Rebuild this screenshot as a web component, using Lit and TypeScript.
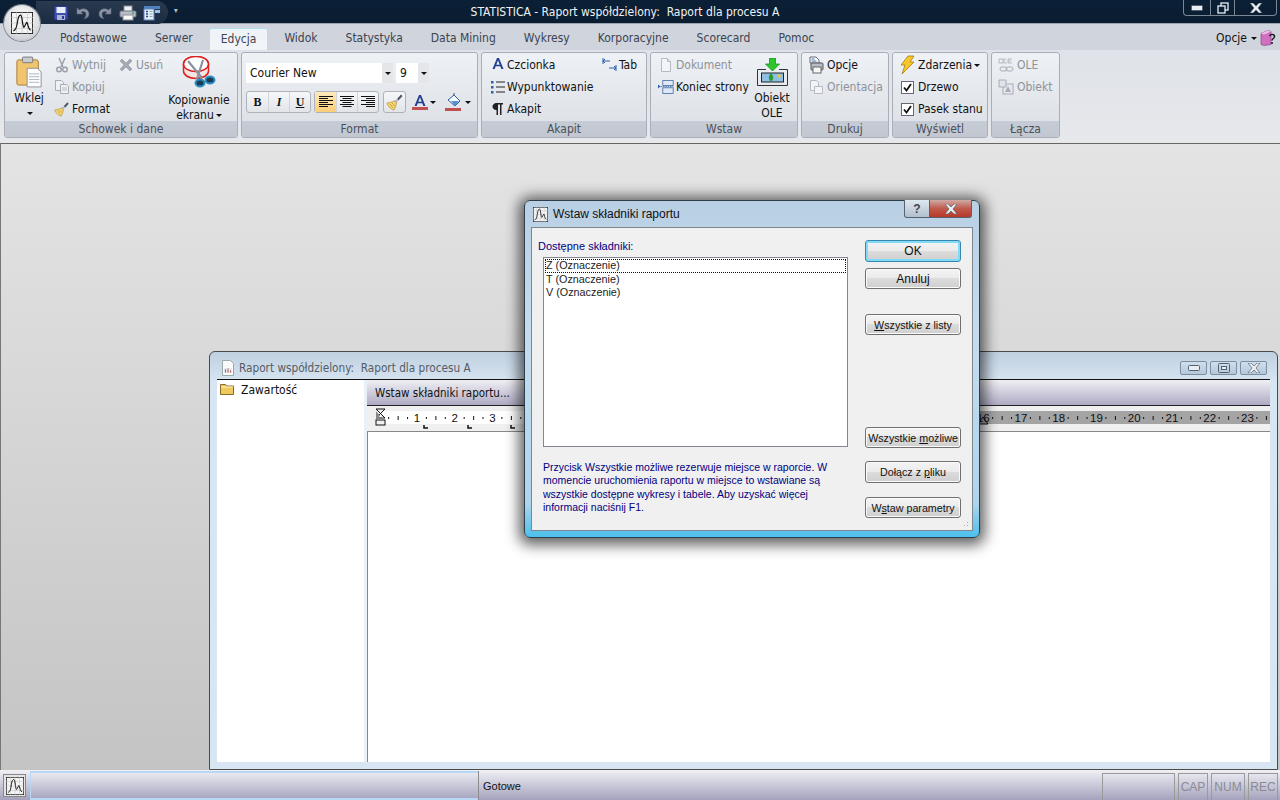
import { LitElement, html, svg, css } from 'lit';
import { customElement } from 'lit/decorators.js';

// small chart glyph used for the app orb, the dialog icon and the status bar
const chart = (size: number) => html`<svg width=${size} height=${size} viewBox="0 0 28 28">
  <rect x=".5" y=".5" width="27" height="27" fill="#f4f4f4" stroke="#222" stroke-width="1.300"/>
  <path d="M0 7h28M0 14h28M0 21h28M7 0v28M14 0v28M21 0v28" stroke="#bbb" stroke-width=".7"/>
  <path d="M3 24c3-1 4-3 5-10s2-10 4-10 2 6 3 11 1 6 3 2 2-5 3-2 1 7 4 8" fill="none" stroke="#111" stroke-width="1.500"/>
</svg>`;

const icons: Record<string, any> = {
  save: html`<svg width="16" height="16" viewBox="0 0 16 16"><rect x="1" y="1" width="14" height="14" rx="1" fill="#3b4fae" stroke="#1c2a70"/><rect x="3.500" y="2" width="9" height="6" fill="#e6ecfa"/><rect x="4" y="10" width="8" height="5" fill="#aab4d8"/><rect x="9" y="11" width="2" height="3" fill="#2b3a90"/></svg>`,
  undo: html`<svg width="16" height="16" viewBox="0 0 16 16"><path d="M2 3v6h6L6 7c3-1.500 5 0 5 2.500 0 2-1 3-2 4 3 0 5-2 5-4.500C14 4.500 9 2 4.500 5z" fill="#8b94a6" stroke="#5c6476" stroke-width=".6"/></svg>`,
  redo: html`<svg width="16" height="16" viewBox="0 0 16 16"><path d="M14 3v6H8l2-2c-3-1.500-5 0-5 2.500 0 2 1 3 2 4-3 0-5-2-5-4.500C2 4.500 7 2 11.500 5z" fill="#8b94a6" stroke="#5c6476" stroke-width=".6"/></svg>`,
  print: html`<svg width="18" height="16" viewBox="0 0 18 16"><rect x="5" y="1" width="8" height="6" fill="#eef0f4" stroke="#8a8f9a"/><rect x="1" y="6" width="16" height="6" rx="1" fill="#b9bdc6" stroke="#70757f"/><rect x="4" y="10" width="10" height="5" fill="#f8f8f8" stroke="#8a8f9a"/><rect x="13" y="7.500" width="2" height="1.500" fill="#3a6"/></svg>`,
  form: html`<svg width="18" height="16" viewBox="0 0 18 16"><rect x="1" y="1" width="16" height="3" fill="#4f80c0"/><rect x="1" y="4" width="10" height="11" fill="#e6eef8" stroke="#5d83b5"/><path d="M3 6.500h2M3 9h2M3 11.500h2" stroke="#204a90" stroke-width="1.400"/><path d="M6.500 6.500h3M6.500 9h3M6.500 11.500h3" stroke="#8aa"/><rect x="12" y="5" width="5" height="3" fill="#9fc0e6"/></svg>`,
  paste: html`<svg width="28" height="32" viewBox="0 0 30 34"><rect x="2" y="4" width="23" height="27" rx="2" fill="#f1c46e" stroke="#a67a30"/><rect x="8" y="1" width="11" height="6" rx="1" fill="#c9ccd2" stroke="#777"/><path d="M13 13h11l4 4v16H13z" fill="#fdfdfd" stroke="#8a8f9a"/><path d="M15 19h11M15 22h11M15 25h11M15 28h11" stroke="#a9b4c6"/></svg>`,
  scissors: html`<svg width="16" height="16" viewBox="0 0 16 16" fill="none" stroke="#9a9ea8" stroke-width="1.400"><path d="M5 1l4 9M11 1L7 10"/><circle cx="5" cy="12.500" r="2.300"/><circle cx="11" cy="12.500" r="2.300"/></svg>`,
  del: html`<svg width="16" height="16" viewBox="0 0 16 16"><path d="M2 4l2-2 4 4 4-4 2 2-4 4 4 4-2 2-4-4-4 4-2-2 4-4z" fill="#a4a8b2" stroke="#8d919b" stroke-width=".5"/></svg>`,
  copy: html`<svg width="16" height="16" viewBox="0 0 16 16" fill="#eef0f4" stroke="#a9adb6"><path d="M1.500 1.500h6l2 2v8h-8z"/><path d="M6.500 5.500h6l2 2v7h-8z"/><path d="M8 9h5M8 11h5" stroke="#b8bcc5"/></svg>`,
  brush: html`<svg width="18" height="18" viewBox="0 0 18 18"><path d="M11 6l4-4.500 1.500 1.500-4 4.500z" fill="#4c5568"/><path d="M11 6l1.500 1.500-2 2-2.500-1.500z" fill="#b9bdc6"/><path d="M8 8c-2 1-5 2-7 2 0 2 3 6 7 7 1-2 2.500-5 2.500-7.500z" fill="#f4d676" stroke="#b58f28" stroke-width=".7"/><path d="M4 11l3 4M6 10l3 3" stroke="#b58f28" stroke-width=".7"/></svg>`,
  capture: html`<svg width="34" height="34" viewBox="0 0 34 34"><ellipse cx="14" cy="8" rx="12.500" ry="7.500" fill="#fff" stroke="#d22" stroke-width="1.500"/><path d="M1.500 8v7c0 4 5 7.500 12.500 7.500S26.500 19 26.500 15V8" fill="#f4e4e4" stroke="#d22" stroke-width="1.500"/><ellipse cx="14" cy="8" rx="12.500" ry="7.500" fill="#fff" stroke="#d22" stroke-width="1.500"/><path d="M6 5l14 17M21 4L15 23" stroke="#8a929e" stroke-width="2.200"/><ellipse cx="18" cy="27" rx="4.500" ry="3.500" fill="#1c3c54" stroke="#2a8fc0" stroke-width="2"/><ellipse cx="28" cy="24" rx="4.500" ry="3.500" fill="#1c3c54" stroke="#2a8fc0" stroke-width="2"/></svg>`,
  alignL: html`<svg width="14" height="12" viewBox="0 0 14 12" stroke="#111"><path d="M0 .5h14M0 2.500h9M0 4.500h14M0 6.500h9M0 8.500h14M0 10.500h9"/></svg>`,
  alignC: html`<svg width="14" height="12" viewBox="0 0 14 12" stroke="#111"><path d="M0 .5h14M2.500 2.500h9M0 4.500h14M2.500 6.500h9M0 8.500h14M2.500 10.500h9"/></svg>`,
  alignR: html`<svg width="14" height="12" viewBox="0 0 14 12" stroke="#111"><path d="M0 .5h14M5 2.500h9M0 4.500h14M5 6.500h9M0 8.500h14M5 10.500h9"/></svg>`,
  bucket: html`<svg width="18" height="18" viewBox="0 0 18 18"><path d="M3 7l6-5 6 6-5 5z" fill="#f4f7fb" stroke="#2b5f9e"/><path d="M6 8h7l1 0-4 5z" fill="#5a90d0"/><path d="M9 2V0" stroke="#555"/><rect x="0" y="15" width="16" height="3" fill="#c05050"/></svg>`,
  fontA: html`<svg width="16" height="16" viewBox="0 0 16 16"><path d="M2.500 12L7 1h2l4.500 11h-2.200l-1-2.700H5.700L4.700 12zM6.300 7.700h3.400L8 3.300z" fill="#23408e"/></svg>`,
  bullets: html`<svg width="16" height="16" viewBox="0 0 16 16"><path d="M6 3h9M6 8h9M6 13h9" stroke="#222"/><rect x="1" y="2" width="2.500" height="2.500" fill="#2b5fa8"/><rect x="1" y="7" width="2.500" height="2.500" fill="#2b5fa8"/><rect x="1" y="12" width="2.500" height="2.500" fill="#2b5fa8"/></svg>`,
  pilcrow: html`<svg width="16" height="16" viewBox="0 0 16 16"><path d="M6.500 14V9C3.500 9 2.500 7 2.500 5.500S4 2 6.500 2H13v1.500h-1.500V14H10V3.500H8V14z" fill="#222"/></svg>`,
  tab: html`<svg width="16" height="16" viewBox="0 0 16 16" fill="none" stroke="#2b5fa8"><path d="M1 1v6M1 4h7M3 2L1 4l2 2" transform="translate(1 0)"/><path d="M15 8v6M8 11h7M13 9l2 2-2 2"/></svg>`,
  doc: html`<svg width="16" height="16" viewBox="0 0 16 16"><path d="M3.500 1.500h6l3 3v10h-9z" fill="#f4f5f8" stroke="#b6bac4"/><path d="M9.500 1.500v3h3" fill="#dde" stroke="#b6bac4"/></svg>`,
  pageBreak: html`<svg width="18" height="16" viewBox="0 0 20 18"><rect x="6" y="1" width="13" height="6" fill="#dfe8f6" stroke="#44689e"/><rect x="6" y="10" width="13" height="7" fill="#dfe8f6" stroke="#44689e"/><path d="M3 8.500h16" stroke="#2b5fa8" stroke-dasharray="2 1"/><path d="M0 6l3 2.500L0 11z" fill="#2b5fa8"/></svg>`,
  ole: html`<svg width="31" height="28" viewBox="0 0 31 28"><path d="M12.500 0h6v6h4l-7 7-7-7h4z" fill="#2cc62c" stroke="#128a12" stroke-width=".7"/><path d="M9 11.500H.5v16h30v-16H22" fill="none" stroke="#333"/><rect x="4.500" y="15" width="22" height="9" fill="#8fc0e4" stroke="#222"/><path d="M14 15.500c3 2 3 6 0 8-3-2-3-6 0-8z" fill="#2a9a3a"/><circle cx="22" cy="18" r="1.800" fill="#e8c840"/></svg>`,
  printOpts: html`<svg width="16" height="18" viewBox="0 0 16 18"><path d="M2 1h6l3 3v3H2z" fill="#fff" stroke="#667"/><rect x="3" y="7" width="12" height="7" rx="1" fill="#b7bcc6" stroke="#555"/><rect x="5" y="11" width="8" height="6" fill="#f8f8f8" stroke="#666"/><path d="M3.500 3h3M3.500 5h5" stroke="#47a"/></svg>`,
  orient: html`<svg width="16" height="16" viewBox="0 0 16 16" fill="#f3f4f7" stroke="#b6bac4"><path d="M2.500 1.500h6l2 2v8h-8z"/><path d="M6.500 7.500h8v7h-8z"/></svg>`,
  bolt: html`<svg width="16" height="20" viewBox="0 0 16 20"><path d="M9 1h6l-4 6h4L3 19l3-9H2z" fill="#f6c82a" stroke="#a87a10" stroke-width=".8"/></svg>`,
  oleLink: html`<svg width="16" height="16" viewBox="0 0 16 16"><path d="M1 2h4v4H1zM6 2h2M6 6h3M6 2v4M10 2h4M10 4h3M10 6h4M10 2v4" fill="none" stroke="#a8acb6" stroke-width=".8"/><path d="M2 12a2 2 0 0 1 2-2h3a2 2 0 0 1 0 4H4a2 2 0 0 1-2-2zM8 12a2 2 0 0 1 2-2h3a2 2 0 0 1 0 4h-3a2 2 0 0 1-2-2z" fill="none" stroke="#a8acb6"/></svg>`,
  oleObj: html`<svg width="16" height="16" viewBox="0 0 16 16"><rect x="5" y="5" width="10" height="10" fill="#e6e8ee" stroke="#a8acb6"/><path d="M1 1h7v7H1z" fill="#dfe2e8" stroke="#a8acb6"/><path d="M7 13l3-6 3 6z" fill="#a8acb6"/></svg>`,
  book: html`<svg width="16" height="16" viewBox="0 0 16 16"><path d="M1 3.500l7-3 3 1v13l-7 1-3-1z" fill="#d070c0" stroke="#7a3a80" stroke-width=".6"/><path d="M1 3.500l7-3 3 1-7 3z" fill="#eec0e4"/><path d="M9.500 6c1-2 5-2 5 .5 0 2-2.500 2-2.500 4M12 12v2" fill="none" stroke="#222" stroke-width="1.600"/></svg>`,
  folder: html`<svg width="14" height="12" viewBox="0 0 14 12"><path d="M.5 2V1.500h5l1 1.500h7v8.500H.5z" fill="#f0c860" stroke="#8a6a24"/><path d="M1 4h12" stroke="#fff3c0"/></svg>`,
  report: html`<svg width="14" height="16" viewBox="0 0 14 16"><path d="M1.500.5h8l3 3v12h-11z" fill="#fafafa" stroke="#9aa"/><path d="M3 8h8v5H3z" fill="#e8e8ee"/><path d="M4.500 12.500v-3M7 12.500v-4M9.500 12.500v-2" stroke="#b54"/></svg>`,
  min: html`<svg width="12" height="6" viewBox="0 0 12 6"><rect x=".5" y=".5" width="11" height="5" rx="1" fill="#e8eef4" stroke="#55606c"/></svg>`,
  max: html`<svg width="12" height="10" viewBox="0 0 12 10"><rect x=".5" y=".5" width="11" height="9" rx="1" fill="none" stroke="#55606c"/><rect x="3.500" y="3.500" width="5" height="3" fill="#e8eef4" stroke="#55606c"/></svg>`,
  restore: html`<svg width="12" height="12" viewBox="0 0 12 12" fill="none" stroke="#e8eef4" stroke-width="1.300"><rect x="4" y="1" width="7" height="7"/><rect x="1" y="4" width="7" height="7" fill="#0b2036"/></svg>`,
  x: html`<svg width="14" height="10" viewBox="0 0 14 10"><path d="M1 0h3l3 3 3-3h3L9 5l4 5h-3L7 7l-3 3H1l4-5z" fill="#e8eef4" stroke="#55606c" stroke-width=".7"/></svg>`,
};

const arrow = html`<span class="arrow"></span>`;

const item = (icon: string, text: string, off = false) => html`<div class="item ${off ? 'off' : ''}">
  <span class="ico">${icons[icon]}</span><span>${text}</span></div>`;

const check = (text: string) => html`<div class="item">
  <span class="ico"><span class="check"><svg width="9" height="9" viewBox="0 0 9 9"><path d="M1 4.500l2.500 3L8 1" fill="none" stroke="#111" stroke-width="1.800"/></svg></span></span><span>${text}</span></div>`;

const TABS = ['Podstawowe', 'Serwer', 'Edycja', 'Widok', 'Statystyka', 'Data Mining', 'Wykresy', 'Korporacyjne', 'Scorecard', 'Pomoc'];

@customElement('app-root')
export class AppRoot extends LitElement {
  static styles = css`
    :host { display: block; width: 1280px; height: 800px; overflow: hidden; font-family: "DejaVu Sans Condensed", "DejaVu Sans", sans-serif; font-size: 12px; color: #111; }
    .app { width: 1280px; height: 800px; display: flex; flex-direction: column; position: relative; overflow: hidden; background: #d0d4dc; }

    /* title bar */
    .titlebar { height: 24px; flex: none; background: linear-gradient(#0b2036, #0a1c30); border-bottom: 1px solid #9aa4ae; color: #eef2f6; display: flex; justify-content: center; align-items: center; white-space: pre; padding-right: 30px; box-sizing: border-box; position: relative; }
    .orb { position: absolute; left: 4px; top: 5px; width: 36px; height: 36px; border-radius: 50%; background: radial-gradient(circle at 50% 35%, #fff, #d4d6da 70%, #9a9ea6); box-shadow: 0 0 0 1px #7c838e; display: flex; align-items: center; justify-content: center; z-index: 3; }
    .qat { position: absolute; left: 36px; top: 1px; width: 132px; height: 23px; border-radius: 0 12px 12px 0; background: linear-gradient(#2a3a4e, #1a2c42); display: flex; align-items: center; padding-left: 17px; gap: 6px; box-sizing: border-box; }
    .qat-more { position: absolute; left: 174px; top: 7px; color: #b8c0cc; font-size: 8px; line-height: 8px; }
    .winctl { position: absolute; right: 3px; top: 0; height: 16px; width: 94px; border: 1px solid #7a8794; border-top: none; border-radius: 0 0 4px 4px; display: grid; grid-template-columns: 26px 24px 1fr; box-sizing: border-box; }
    .winctl span { display: flex; align-items: center; justify-content: center; border-left: 1px solid #7a8794; }
    .winctl span:first-child { border-left: none; }

    /* tabs */
    .tabs { height: 26px; flex: none; display: flex; align-items: flex-end; padding-left: 46px; background: #d0d4dc; position: relative; color: #3c4450; }
    .tab { height: 22px; line-height: 21px; padding: 0 14px; box-sizing: border-box; }
    .tab.on { background: linear-gradient(#eef3f8, #f2f4f8); border: 1px solid #b4e0ea; border-bottom: none; border-radius: 3px 3px 0 0; padding: 0 11px; margin: 0 2px; }
    .opts { position: absolute; right: 4px; bottom: 4px; display: flex; align-items: center; gap: 2px; color: #111; }
    .opts svg { margin-left: 1px; }

    /* ribbon */
    .ribbon { height: 93px; flex: none; display: flex; gap: 3px; padding: 2px 0 0 4px; box-sizing: border-box; background: linear-gradient(#dfe2e8, #e6e8ec); border-bottom: 2px solid #e8e8e8; }
    .group { height: 86px; box-sizing: border-box; border: 1px solid #a9aeb8; border-radius: 3px; display: flex; flex-direction: column; background: linear-gradient(#eef1f5, #e2e5ea 60%, #dcdfe5); overflow: hidden; }
    .group-body { flex: 1; display: flex; min-height: 0; }
    .cap { height: 16px; flex: none; background: linear-gradient(#c6ccd6, #c2c7d0); text-align: center; line-height: 17px; color: #4a505a; }
    .w-clip { width: 234px; } .w-fmt { width: 237px; } .w-par { width: 166px; } .w-ins { width: 148px; }
    .w-prt { width: 88px; } .w-view { width: 96px; } .w-link { width: 69px; }
    .col { display: flex; flex-direction: column; flex: none; }
    .item { height: 22px; box-sizing: border-box; padding-top: 2px; display: flex; align-items: center; gap: 2px; white-space: nowrap; }
    .item.off { color: #8e9299; }
    .ico { width: 16px; height: 16px; display: flex; align-items: center; justify-content: center; flex: none; }
    .big { display: flex; flex-direction: column; align-items: center; flex: none; line-height: 15px; text-align: center; white-space: nowrap; }
    .big .pic { height: 35px; margin-top: 3px; display: flex; align-items: center; justify-content: center; margin-bottom: 3px; }
    .arrow { display: inline-block; width: 0; height: 0; border: 3px solid transparent; border-top: 3px solid #111; border-bottom: none; vertical-align: 2px; margin-left: 2px; }
    .check { width: 13px; height: 13px; box-sizing: border-box; border: 1px solid #667; background: #fff; display: flex; align-items: center; justify-content: center; }

    .clip-big { width: 44px; margin-left: 2px; }
    .clip-col { margin-left: 3px; width: 64px; }
    .clip-col2 { width: 50px; }
    .clip-shot { width: 62px; }
    .fmt { flex-direction: column; padding: 10px 0 0 4px; gap: 8px; }
    .fmt-row { display: flex; align-items: center; }
    .combo { height: 20px; background: #fff; display: flex; align-items: center; justify-content: space-between; padding-left: 4px; box-sizing: border-box; }
    .combo i { width: 11px; height: 20px; background: #e4e6ea; display: flex; align-items: center; justify-content: center; }
    .combo .arrow { margin: 0; }
    .c-font { width: 147px; margin-right: 3px; }
    .c-size { width: 33px; }
    .tools { display: flex; height: 22px; border: 1px solid #aeb2ba; border-radius: 3px; background: linear-gradient(#f6f7f9, #e2e4e8); box-sizing: border-box; margin-right: 4px; }
    .tools.tight { margin-right: 3px; }
    .tools b { width: 21px; box-sizing: border-box; display: flex; align-items: center; justify-content: center; border-left: 1px solid #d2d4da; font-family: "Liberation Serif", serif; font-size: 12px; }
    .tools b:first-child { border-left: none; }
    .tools b.sel { background: linear-gradient(#fde9bc, #fbce78); }
    .u { text-decoration: underline; }
    .it { font-style: italic; }
    .color { display: flex; align-items: center; width: 33px; }
    .color.first { margin-left: 2px; }
    .bar-a { display: flex; flex-direction: column; align-items: center; }
    .bar-a::after { content: ""; width: 16px; height: 3px; background: #c05050; margin-top: -3px; }
    .par-col { width: 111px; margin-left: 8px; }
    .par-col .item { gap: 1px; }
    .ins-col { width: 94px; margin-left: 7px; }
    .ole-big { width: 40px; }
    .one-col { margin-left: 6px; }
    .one-col .item { gap: 3px; }

    /* workspace and floating windows */
    .work { flex: 1; position: relative; background: linear-gradient(#e4e4e4, #c4c4c4); border-left: 1px solid #777; overflow: hidden; border-top: 1px solid #666; }
    .report { position: absolute; left: 208px; top: 207px; width: 1069px; height: 419px; box-sizing: border-box; border: 1px solid #4a4a4a; border-radius: 6px 6px 0 0; background: linear-gradient(#bfd0e0, #d8e5f2 30px); display: flex; flex-direction: column; padding: 0 7px 7px 7px; }
    .report-title { height: 27px; flex: none; display: flex; align-items: center; gap: 4px; color: #555c66; white-space: pre; font-size: 11.700px; padding: 5px 0 0 4px; box-sizing: border-box; position: relative; }
    .report-ctl { position: absolute; right: 3px; top: 9px; display: flex; gap: 3px; }
    .report-ctl span { width: 27px; height: 14px; box-sizing: border-box; border: 1px solid #7d8ea0; border-radius: 2px; display: flex; align-items: center; justify-content: center; background: linear-gradient(#cfdfee, #b4c8da); }
    .report-body { flex: 1; display: flex; border-top: 1px solid #111; background: #e8f0f8; min-height: 0; }
    .tree { width: 147px; background: #fff; display: flex; align-items: flex-start; gap: 7px; padding: 3px 3px; line-height: 14px; box-sizing: border-box; flex: none; }
    .pane { flex: 1; margin-left: 3px; background: #f0f0f0; display: flex; flex-direction: column; min-width: 0; }
    .toolbar { height: 26px; box-sizing: border-box; flex: none; background: linear-gradient(#f0f0f4, #aeaac4); border-bottom: 1px solid #222; display: flex; align-items: center; padding-left: 8px; font-size: 11.500px; }
    .ruler { display: block; flex: none; }
    .doc { flex: 1; background: #fff; border-left: 1px solid #888; border-top: 1px solid #888; }

    .dialog { position: absolute; left: 523px; top: 56px; width: 456px; height: 338px; box-sizing: border-box; border: 1px solid #2e3e4a; border-radius: 6px; background: linear-gradient(#b9cfe4, #c6dcee 40%, #aed4ec 90%, #4cc0ec); box-shadow: 0 2px 14px 5px rgba(0,0,0,.62); display: flex; flex-direction: column; padding: 0 6px 6px 6px; font-family: "Liberation Sans", sans-serif; font-size: 10.700px; z-index: 2; }
    .dlg-title { height: 26px; flex: none; display: flex; align-items: center; gap: 5px; position: relative; font-size: 12px; padding-left: 2px; }
    .dlg-ctl { position: absolute; right: 1px; top: -1px; display: flex; }
    .dlg-ctl span { height: 18px; box-sizing: border-box; border: 1px solid #56626e; border-top: none; display: flex; align-items: center; justify-content: center; }
    .help { width: 26px; border-radius: 0 0 0 3px; background: linear-gradient(#dfe8f0, #b0c0ce); font-weight: 700; color: #445; font-size: 12px; }
    .close { width: 42px; border-radius: 0 0 3px 0; background: linear-gradient(#d0aaa6, #c05a4c 50%, #b83828); border-left: none !important; }
    .client { flex: 1; border: 1px solid #7d8790; background: #f0f0f0; display: flex; position: relative; min-height: 0; }
    .left { width: 317px; margin-left: 6px; flex: none; display: flex; flex-direction: column; }
    .label { color: #000080; margin-top: 11px; height: 18px; line-height: 14px; font-size: 11px; }
    .list { height: 190px; width: 305px; margin-left: 5px; box-sizing: border-box; border: 1px solid #828790; background: #fff; padding: 1px; color: #222; font-size: 10.800px; }
    .list div { padding-left: 1px; height: 13.500px; line-height: 13px; }
    .list div:first-child { outline: 1px dotted #111; outline-offset: -1px; }
    .note { color: #000080; margin: 14px 0 0 5px; width: 305px; line-height: 13.400px; font-size: 10.500px; }
    .right { flex: 1; display: flex; flex-direction: column; align-items: flex-start; padding-left: 10px; padding-top: 12px; }
    .btn { width: 96px; height: 21px; box-sizing: border-box; border: 1px solid #707070; border-radius: 3px; background: linear-gradient(#f4f4f4, #ebebeb 48%, #dcdcdc 50%, #cfcfcf); box-shadow: inset 0 0 0 1px #fbfbfb; display: flex; align-items: center; justify-content: center; color: #111; white-space: pre; flex: none; }
    .btn.lg { font-size: 12px; }
    .btn.def { height: 22px; border-color: #3a85ad; box-shadow: inset 0 0 0 2px #7fdcf8; margin-bottom: 6px; }
    .m1 { margin-bottom: 25px; height: 21px; }
    .m2 { margin-bottom: 92px; height: 21px; }
    .m3 { margin-bottom: 13px; height: 21px; }
    .m4 { margin-bottom: 14px; height: 22px; }
    .grip { position: absolute; right: 2px; bottom: 2px; width: 10px; height: 10px; background-image: radial-gradient(#a8a8a8 1px, transparent 1px); background-size: 3px 3px; clip-path: polygon(100% 0, 100% 100%, 0 100%); }

    /* status bar */
    .status { height: 30px; flex: none; display: flex; align-items: stretch; background: linear-gradient(#eeeef4, #a4a2bc); border-top: 1px solid #f0f0f0; box-sizing: border-box; position: relative; }
    .st-ic { width: 23px; height: 23px; margin: 3px 4px 0 3px; box-sizing: border-box; background: #e4e4e4; border: 1px solid #888; display: flex; align-items: center; justify-content: center; flex: none; }
    .st-bar { width: 448px; flex: none; border-top: 2px solid #b8d6f6; border-bottom: 2px solid #b8d6f6; box-sizing: border-box; border-left: 1px solid #b8d6f6; }
    .st-msg { flex: 1; border-left: 1px solid #8c8c8c; padding-left: 4px; display: flex; align-items: center; font-family: "Liberation Sans", sans-serif; font-size: 11px; }
    .st-cell { border: 1px solid #9a9a9a; border-bottom: none; margin-top: 2px; margin-left: 3px; display: flex; align-items: center; justify-content: center; color: #8a8a94; font-family: "Liberation Sans", sans-serif; font-size: 12px; box-sizing: border-box; }
    .st-empty { width: 73px; margin-left: 0; } .st-cap { width: 30px; } .st-num { width: 34px; } .st-rec { width: 30px; margin-right: 2px; }
  `;

  // ruler marks are laid out from the cm scale, so this one is drawn rather than flowed
  private ruler() {
    const cm = (n: number) => 50 + (n - 1) * 37.75;
    const ticks: string[] = [];
    for (let n = 0; n <= 23; n++) {
      const x = cm(n);
      if (x > 12) ticks.push(`M${x + 9.4} 11v2M${x + 18.9} 10v4M${x + 28.3} 11v2`);
    }
    const nums = Array.from({ length: 23 }, (_, i) => i + 1);
    const tabs = [58, 102, 145, 188, 232, 275, 319, 362, 406, 450, 493, 537];
    return html`<svg class="ruler" width="903" height="25" viewBox="0 0 903 25">
      <rect width="903" height="25" fill="#f0f0f0"/>
      <rect x="9" y="5" width="600" height="13" fill="#fff"/>
      <rect x="609" y="5" width="294" height="13" fill="#a4a4a4"/>
      <path d=${ticks.join('')} stroke="#111" fill="none"/>
      ${nums.map(n => svg`<text x=${cm(n)} y="16" text-anchor="middle" font-size="11.500" font-family="Liberation Sans" fill="#111">${n}</text>`)}
      <path d="M9 3h9l-9 9h9z" fill="#f0f0f0" stroke="#111"/>
      <path d="M9 5v9l4-4.500z" fill="#888"/>
      <rect x="9" y="14" width="9" height="5" fill="#f0f0f0" stroke="#111"/>
      <path d="M611 18h10l-5-7z" fill="none" stroke="#111"/>
      ${tabs.map(x => svg`<path d=${`M${x - 1} 19v3h4`} fill="none" stroke="#111" stroke-width="1.500"/>`)}
    </svg>`;
  }

  render() {
    return html`<div class="app">
      <div class="titlebar">
        <div class="qat">${icons.save}${icons.undo}${icons.redo}${icons.print}${icons.form}</div>
        <div class="qat-more">▾</div>
        <span>STATISTICA - Raport współdzielony:  Raport dla procesu A</span>
        <div class="winctl"><span>${icons.min}</span><span>${icons.restore}</span><span>${icons.x}</span></div>
      </div>
      <div class="orb">${chart(22)}</div>
      <div class="tabs">
        ${TABS.map(t => html`<div class="tab ${t === 'Edycja' ? 'on' : ''}">${t}</div>`)}
        <div class="opts">Opcje${arrow}${icons.book}</div>
      </div>
      <div class="ribbon">
        <div class="group w-clip"><div class="group-body">
          <div class="big clip-big"><div class="pic">${icons.paste}</div><div>Wklej<br>${arrow}</div></div>
          <div class="col clip-col">${item('scissors', 'Wytnij', true)}${item('copy', 'Kopiuj', true)}${item('brush', 'Format')}</div>
          <div class="col clip-col2">${item('del', 'Usuń', true)}</div>
          <div class="big clip-shot"><div class="pic">${icons.capture}</div><div>Kopiowanie<br>ekranu${arrow}</div></div>
        </div><div class="cap">Schowek i dane</div></div>

        <div class="group w-fmt"><div class="group-body fmt">
          <div class="fmt-row">
            <div class="combo c-font">Courier New<i>${arrow}</i></div>
            <div class="combo c-size">9<i>${arrow}</i></div>
          </div>
          <div class="fmt-row">
            <div class="tools tight"><b>B</b><b class="it">I</b><b class="u">U</b></div>
            <div class="tools"><b class="sel">${icons.alignL}</b><b>${icons.alignC}</b><b>${icons.alignR}</b></div>
            <div class="tools"><b>${icons.brush}</b></div>
            <div class="color first"><span class="bar-a">${icons.fontA}</span>${arrow}</div>
            <div class="color">${icons.bucket}${arrow}</div>
          </div>
        </div><div class="cap">Format</div></div>

        <div class="group w-par"><div class="group-body">
          <div class="col par-col">${item('fontA', 'Czcionka')}${item('bullets', 'Wypunktowanie')}${item('pilcrow', 'Akapit')}</div>
          <div class="col">${item('tab', 'Tab')}</div>
        </div><div class="cap">Akapit</div></div>

        <div class="group w-ins"><div class="group-body">
          <div class="col ins-col">${item('doc', 'Dokument', true)}${item('pageBreak', 'Koniec strony')}</div>
          <div class="big ole-big"><div class="pic">${icons.ole}</div><div>Obiekt<br>OLE</div></div>
        </div><div class="cap">Wstaw</div></div>

        <div class="group w-prt"><div class="group-body">
          <div class="col one-col">${item('printOpts', 'Opcje')}${item('orient', 'Orientacja', true)}</div>
        </div><div class="cap">Drukuj</div></div>

        <div class="group w-view"><div class="group-body">
          <div class="col one-col"><div class="item"><span class="ico">${icons.bolt}</span><span>Zdarzenia${arrow}</span></div>${check('Drzewo')}${check('Pasek stanu')}</div>
        </div><div class="cap">Wyświetl</div></div>

        <div class="group w-link"><div class="group-body">
          <div class="col one-col">${item('oleLink', 'OLE', true)}${item('oleObj', 'Obiekt', true)}</div>
        </div><div class="cap">Łącza</div></div>
      </div>

      <div class="work">
        <div class="report">
          <div class="report-title">${icons.report}<span>Raport współdzielony:  Raport dla procesu A</span>
            <div class="report-ctl"><span>${icons.min}</span><span>${icons.max}</span><span>${icons.x}</span></div>
          </div>
          <div class="report-body">
            <div class="tree">${icons.folder}<span>Zawartość</span></div>
            <div class="pane">
              <div class="toolbar">Wstaw składniki raportu...</div>
              ${this.ruler()}
              <div class="doc"></div>
            </div>
          </div>
        </div>
        <div class="dialog">
          <div class="dlg-title">${chart(15)}<span>Wstaw składniki raportu</span>
            <div class="dlg-ctl"><span class="help">?</span><span class="close">${icons.x}</span></div>
          </div>
          <div class="client">
            <div class="left">
              <div class="label">Dostępne składniki:</div>
              <div class="list"><div>Z (Oznaczenie)</div><div>T (Oznaczenie)</div><div>V (Oznaczenie)</div></div>
              <div class="note">Przycisk Wszystkie możliwe rezerwuje miejsce w raporcie. W momencie uruchomienia raportu w miejsce to wstawiane są wszystkie dostępne wykresy i tabele. Aby uzyskać więcej informacji naciśnij F1.</div>
            </div>
            <div class="right">
              <div class="btn def lg">OK</div>
              <div class="btn m1 lg">Anuluj</div>
              <div class="btn m2"><span class="u">W</span>szystkie z listy</div>
              <div class="btn m3">Wszystkie <span class="u">m</span>ożliwe</div>
              <div class="btn m4">Dołącz z <span class="u">p</span>liku</div>
              <div class="btn">W<span class="u">s</span>taw parametry</div>
            </div>
            <div class="grip"></div>
          </div>
        </div>
      </div>

      <div class="status">
        <div class="st-ic">${chart(18)}</div>
        <div class="st-bar"></div>
        <div class="st-msg">Gotowe</div>
        <div class="st-cell st-empty"></div>
        <div class="st-cell st-cap">CAP</div>
        <div class="st-cell st-num">NUM</div>
        <div class="st-cell st-rec">REC</div>
      </div>
    </div>`;
  }
}
